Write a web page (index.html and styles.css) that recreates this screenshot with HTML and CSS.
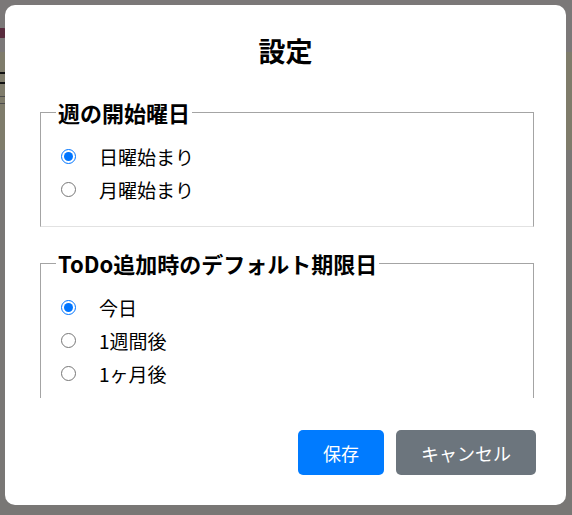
FILE: index.html
```html
<!DOCTYPE html>
<html lang="ja">
<head>
<meta charset="utf-8">
<title>設定</title>
<link rel="stylesheet" href="styles.css">
</head>
<body>
<div class="page">
  <header class="page-header"><span class="logo"></span></header>
  <div class="page-band"><span class="menu"></span><span class="mark"></span></div>
</div>
<div class="overlay"></div>
<div class="modal" role="dialog">
  <h2 class="modal-title">設定</h2>
  <div class="modal-body">
    <fieldset class="group">
      <legend class="group-title">週の開始曜日</legend>
      <label class="option"><input type="radio" name="week" checked><span>日曜始まり</span></label>
      <label class="option"><input type="radio" name="week"><span>月曜始まり</span></label>
    </fieldset>
    <fieldset class="group">
      <legend class="group-title">ToDo追加時のデフォルト期限日</legend>
      <label class="option"><input type="radio" name="due" checked><span>今日</span></label>
      <label class="option"><input type="radio" name="due"><span>1週間後</span></label>
      <label class="option"><input type="radio" name="due"><span>1ヶ月後</span></label>
    </fieldset>
  </div>
  <div class="modal-footer">
    <button class="btn btn-primary">保存</button>
    <button class="btn btn-secondary">キャンセル</button>
  </div>
</div>
</body>
</html>
```

FILE: styles.css
```css
html, body {
  margin: 0;
  padding: 0;
  height: 100%;
}
body {
  font-family: "Noto Sans CJK JP", "Noto Sans", sans-serif;
  background: #f2eeea;
  overflow: hidden;
}
.page-header {
  height: 52px;
  background: #f6f1f1;
  display: flex;
  align-items: flex-end;
}
.logo {
  display: block;
  width: 10px;
  height: 10px;
  margin: 0 0 14px -4px;
  background: #b0577a;
  border-radius: 2px;
}
.page-band {
  height: 98px;
  background: #fff9d6;
  display: flex;
  flex-direction: column;
}
.menu {
  display: block;
  width: 8px;
  height: 8px;
  margin: 20px 0 0 -2px;
  border-top: 2px solid #222;
  border-bottom: 2px solid #222;
}
.mark {
  display: block;
  width: 6px;
  height: 6px;
  margin: 12px 0 0 -2px;
  border: 1px solid #999;
}
.overlay {
  position: fixed;
  inset: 0;
  background: rgba(0, 0, 0, 0.5);
}
.modal {
  position: absolute;
  left: 5px;
  top: 5px;
  width: 561px;
  height: 500px;
  box-sizing: border-box;
  padding: 30px;
  background: #fff;
  border-radius: 10px;
  display: flex;
  flex-direction: column;
  color: #111;
}
.modal-title {
  margin: 0;
  font-size: 27px;
  line-height: 31px;
  font-weight: 700;
  text-align: center;
  color: #000;
}
.modal-body {
  margin-top: 32px;
  height: 300px;
  overflow: hidden;
  padding: 0 2px 0 5px;
}
.group {
  margin: 0;
  padding: 14px 15px 20px 15px;
  border: 1px solid #a4a4a4;
  border-bottom-color: #e2e2e2;
  display: flex;
  flex-direction: column;
}
.group + .group {
  margin-top: 22px;
}
.group-title {
  padding: 0 2px;
  font-size: 22px;
  line-height: 28px;
  font-weight: 700;
  color: #000;
}
.option {
  display: flex;
  align-items: center;
  height: 33px;
  font-size: 19px;
  color: #000;
}
.option input {
  width: 15px;
  height: 15px;
  margin: 0 23px 0 5px;
}
.modal-footer {
  margin-top: 32px;
  display: flex;
  justify-content: flex-end;
  gap: 12px;
}
.btn {
  height: 45px;
  padding: 0 25px;
  border: none;
  border-radius: 5px;
  font-family: inherit;
  font-size: 18px;
  color: #fff;
}
.btn-primary {
  background: #007bff;
}
.btn-secondary {
  background: #6c757d;
}
```
